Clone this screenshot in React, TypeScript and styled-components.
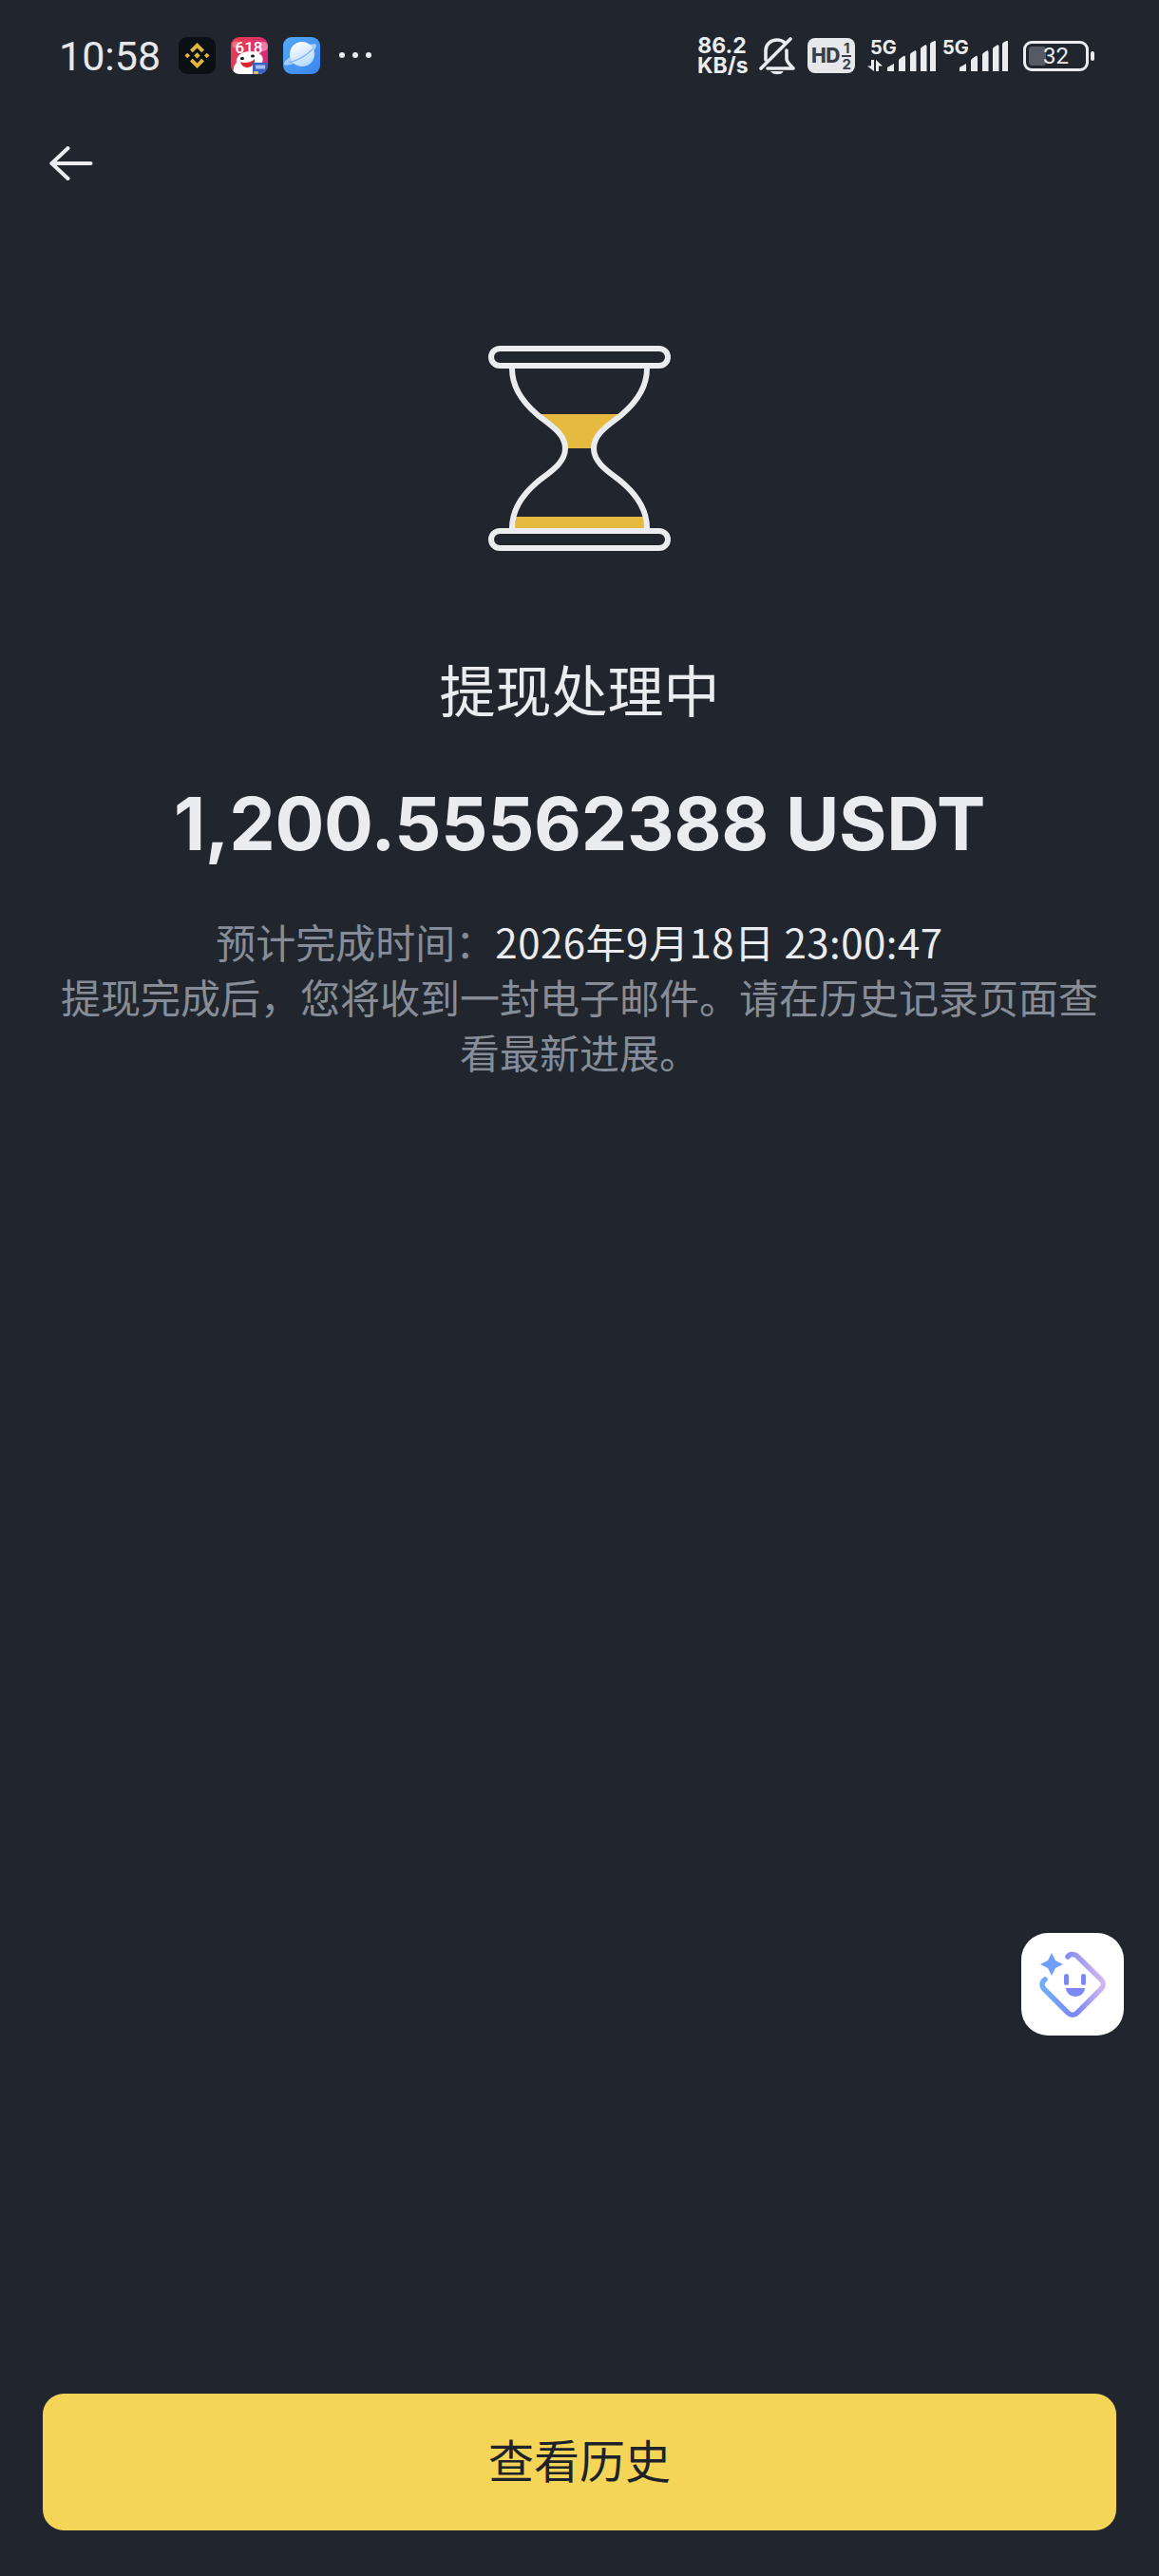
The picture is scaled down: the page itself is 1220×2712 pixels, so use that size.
import React from 'react'
import styled, { createGlobalStyle } from 'styled-components'

const Global = createGlobalStyle`
    html, body {
        margin: 0;
        padding: 0;
        background: #21262e;
    }
`

const BinanceIcon = () => (
    <svg width='39' height='39' viewBox='0 0 39 39'>
        <rect width='39' height='39' rx='9' fill='#0c1014' />
        <g fill='#e3b53f'>
            <path d='M19.5 6l7.5 7.500-2.800 2.800-4.700-4.700-4.700 4.700-2.800-2.800z' />
            <path d='M19.5 33l7.500-7.500-2.800-2.800-4.700 4.700-4.700-4.700-2.800 2.800z' />
            <path d='M19.5 16.300l3.200 3.200-3.200 3.200-3.200-3.200z' />
            <path d='M9.300 16.700l2.800 2.800-2.800 2.800-2.800-2.800z' />
            <path d='M29.700 16.700l2.800 2.800-2.800 2.800-2.800-2.800z' />
        </g>
    </svg>
)

const ShopIcon = () => (
    <svg width='39' height='39' viewBox='0 0 39 39'>
        <defs>
            <linearGradient id='shopBg' x1='0' y1='0' x2='1' y2='0.4'>
                <stop offset='0' stopColor='#e8404c' />
                <stop offset='1' stopColor='#d92a78' />
            </linearGradient>
            <clipPath id='shopClip'>
                <rect width='39' height='39' rx='9' />
            </clipPath>
        </defs>
        <g clipPath='url(#shopClip)'>
            <rect width='39' height='39' fill='url(#shopBg)' />
            <circle cx='34' cy='10' r='5' fill='#f27aa8' />
            <circle cx='5' cy='8' r='3.500' fill='#f2707e' />
            <path d='M3 39c-1-5 0-9 3-12-1-4 2-9 8-11 6-2 14-1 18 3 2 2 2 5 1 8v12z' fill='#fff' />
            <path d='M10 26c4 2 12 1 15-3 1 5-3 9-8 9-3 0-6-2-7-6z' fill='#d8262f' />
            <rect x='10' y='21' width='4' height='3' rx='1.500' fill='#1d1d1d' />
            <rect x='21' y='18.500' width='4' height='3' rx='1.500' fill='#1d1d1d' />
            <rect x='23' y='27' width='16' height='12' fill='#3a62c8' />
            <rect x='24' y='36' width='5' height='3' fill='#e9bf3f' />
            <path d='M26 29.500h10v4H26z' fill='#a9bfee' />
            <Digits x='19' y='17' textAnchor='middle'>618</Digits>
        </g>
    </svg>
)

const BrowserIcon = () => (
    <svg width='39' height='39' viewBox='0 0 39 39'>
        <defs>
            <linearGradient id='browserBg' x1='0' y1='0' x2='1' y2='1'>
                <stop offset='0' stopColor='#55a9f8' />
                <stop offset='1' stopColor='#3a84ee' />
            </linearGradient>
            <linearGradient id='planet' x1='0.2' y1='0' x2='0.7' y2='1'>
                <stop offset='0' stopColor='#ffffff' />
                <stop offset='1' stopColor='#b4d8fb' />
            </linearGradient>
        </defs>
        <rect width='39' height='39' rx='9' fill='url(#browserBg)' />
        <path d='M28 8c4-1 7-1 7 1 0 3-6 10-15 15-8 4-17 7-19 5-1-1 1-4 5-7z' fill='#a4d0fb' />
        <circle cx='20' cy='18' r='13' fill='url(#planet)' />
        <path d='M6 27c8-2 18-7 26-15' fill='none' stroke='#7fbaf8' strokeWidth='1.500' />
    </svg>
)

const BackArrow = () => (
    <svg width='46' height='36' viewBox='0 0 46 36' fill='none' stroke='#eaecef' strokeWidth='4' strokeLinecap='round' strokeLinejoin='round'>
        <path d='M2.500 18H43.500' />
        <path d='M19.500 2L2.500 18l17 16' />
    </svg>
)

const MutedBell = () => (
    <svg width='38' height='40' viewBox='0 0 38 40' fill='none' stroke='#eaecef' strokeWidth='3.600' strokeLinecap='round' strokeLinejoin='round'>
        <path d='M7 24V14C7 8 12 3 19 3C22 3 25 4 27 6' />
        <path d='M29 14V23C29 27 34 30 36 33H9' />
        <path d='M2 33L33 2' />
        <path d='M13 36.500H25C24 39.500 14 39.500 13 36.500Z' fill='#eaecef' strokeWidth='1' />
    </svg>
)

const SignalBars = () => (
    <svg width='51' height='32' viewBox='0 0 51 32' fill='#eaecef'>
        <path d='M0 32v-4l7-4v8z' />
        <path d='M12 32V21c0-1 .5-1.500 1-2l4-3c1-.5 2 0 2 1.500V32z' />
        <path d='M24 32V15c0-1 .5-2 1.500-2.500l3-2c1-.5 2 0 2 1.500v20z' />
        <path d='M35 32V9c0-1 .5-2 1.500-2.500l3-2c1-.5 2 0 2 1.500v26z' />
        <path d='M45 32V4c0-1 .5-2 1.500-2.500l3-1.500c1-.5 1.500 0 1.500 1.500V32z' />
    </svg>
)

const NetArrows = () => (
    <svg width='16' height='12' viewBox='0 0 16 12' fill='#eaecef'>
        <path d='M4 0h3v12L0 6.500h4z' />
        <path d='M9 12h3V6.500h4L9 0z' />
    </svg>
)

const HourGlass = () => (
    <svg width='198' height='222' viewBox='0 0 198 222' fill='none'>
        <path d='M53 75H145C134 84 114 94 114 111H84C84 94 64 84 53 75Z' fill='#e6b93f' />
        <path d='M32 183H166L168 195H30Z' fill='#e6b93f' />
        <g stroke='#eaecef' strokeWidth='6'>
            <rect x='6' y='6' width='186' height='18' rx='9' />
            <rect x='6' y='198' width='186' height='18' rx='9' />
            <path d='M28 27C28 48 40 63 54 75C64 84 84 94 84 111C84 128 64 138 54 147C40 159 28 174 28 195' />
            <path d='M170 27C170 48 158 63 144 75C134 84 114 94 114 111C114 128 134 138 144 147C158 159 170 174 170 195' />
        </g>
    </svg>
)

const AssistantIcon = () => (
    <svg width='72' height='72' viewBox='0 0 72 72' fill='none'>
        <defs>
            <linearGradient id='faceStroke' x1='0' y1='0.6' x2='1' y2='0.4'>
                <stop offset='0' stopColor='#70b0f8' />
                <stop offset='0.45' stopColor='#7a86f4' />
                <stop offset='1' stopColor='#d6b8ec' />
            </linearGradient>
        </defs>
        <path d='M14 3l4 8 8 4-8 4-4 8-4-8-8-4 8-4z' fill='#6f9ffa' />
        <path d='M31 7C33 4 38 3.500 41 6.500L66 31C69 34 69 38 66 41L41 66C38 69 34 69 31 66L7 42C3 38 3 34 7 31' stroke='url(#faceStroke)' strokeWidth='5.500' strokeLinecap='round' />
        <rect x='27' y='25' width='5' height='12' rx='2.500' fill='#7d86f5' />
        <rect x='45' y='25' width='5' height='12' rx='2.500' fill='#7d86f5' />
        <path d='M29 40H49C49 45 44 49 39 49S29 45 29 40Z' fill='#7d86f5' />
    </svg>
)

export default function App() {
    return (
        <Page>
            <Global />
            <StatusBar>
                <StatusLeft>
                    <Clock>10:58</Clock>
                    <AppIcons>
                        <BinanceIcon />
                        <ShopIcon />
                        <BrowserIcon />
                    </AppIcons>
                    <Dots>
                        <Dot />
                        <Dot />
                        <Dot />
                    </Dots>
                </StatusLeft>
                <StatusRight>
                    <Speed>
                        86.2
                        <br />
                        KB/s
                    </Speed>
                    <MutedBell />
                    <HdBadge>
                        HD
                        <HdSims>
                            <span>1</span>
                            <HdRule />
                            <span>2</span>
                        </HdSims>
                    </HdBadge>
                    <Signal>
                        <NetColumn $width={21}>
                            <NetLabel $inset={3}>5G</NetLabel>
                            <NetArrows />
                        </NetColumn>
                        <SignalBars />
                    </Signal>
                    <Signal>
                        <NetColumn $width={18}>
                            <NetLabel $inset={0}>5G</NetLabel>
                        </NetColumn>
                        <SignalBars />
                    </Signal>
                    <Battery>
                        <BatteryBody>
                            <BatteryFill />
                            <BatteryLevel>32</BatteryLevel>
                        </BatteryBody>
                        <BatteryTip />
                    </Battery>
                </StatusRight>
            </StatusBar>
            <NavBar>
                <BackArrow />
            </NavBar>
            <Content>
                <HourGlass />
                <Title>提现处理中</Title>
                <Amount>1,200.55562388 USDT</Amount>
                <Description>
                    <p>
                        预计完成时间：<strong>2026年9月18日 23:00:47</strong>
                    </p>
                    <p>提现完成后，您将收到一封电子邮件。请在历史记录页面查看最新进展。</p>
                </Description>
            </Content>
            <Footer>
                <HistoryButton>查看历史</HistoryButton>
            </Footer>
            <FloatingButton>
                <AssistantIcon />
            </FloatingButton>
        </Page>
    )
}

const cjk = `"Noto Sans CJK SC", "Noto Sans", sans-serif`

const Digits = styled.text`
    font-family: Roboto, sans-serif;
    font-size: 17px;
    font-weight: 500;
    fill: #ffffff;
`

const Page = styled.div`
    position: relative;
    display: flex;
    flex-direction: column;
    width: 1220px;
    height: 2712px;
    overflow: hidden;
    background: #21262e;
    color: #eaecef;
    font-family: ${cjk};
`

const StatusBar = styled.header`
    display: flex;
    justify-content: space-between;
    align-items: center;
    height: 117px;
    padding: 0 68px 0 62px;
    box-sizing: border-box;
`

const StatusLeft = styled.div`
    display: flex;
    align-items: center;
`

const Clock = styled.span`
    width: 126px;
    font-family: Roboto, sans-serif;
    font-size: 43px;
    line-height: 50px;
    color: #e6e8ec;
`

const AppIcons = styled.div`
    display: flex;
    gap: 16px;
    svg {
        display: block;
    }
`

const Dots = styled.div`
    display: flex;
    gap: 8px;
    margin-left: 20px;
    margin-top: -2px;
`

const Dot = styled.i`
    width: 6px;
    height: 6px;
    border-radius: 50%;
    background: #eaecef;
`

const StatusRight = styled.div`
    display: flex;
    align-items: center;
`

const Speed = styled.div`
    width: 52px;
    margin-right: 13px;
    text-align: center;
    white-space: nowrap;
    font-family: Inter, sans-serif;
    font-weight: 700;
    font-size: 23px;
    line-height: 21px;
    color: #eaecef;
`

const HdBadge = styled.div`
    display: flex;
    align-items: center;
    justify-content: center;
    gap: 2px;
    width: 50px;
    height: 37px;
    margin-left: 13px;
    margin-right: 13px;
    border-radius: 8px;
    background: #e6e8ec;
    color: #3a3f47;
    font-family: Inter, sans-serif;
    font-weight: 800;
    font-size: 21px;
    letter-spacing: -0.5px;
`

const HdSims = styled.div`
    display: flex;
    flex-direction: column;
    align-items: center;
    font-size: 15px;
    font-weight: 700;
    line-height: 15px;
`

const HdRule = styled.i`
    width: 10px;
    height: 2px;
    background: #3a3f47;
`

const Signal = styled.div`
    display: flex;
    align-items: flex-end;
    margin-right: 7px;
    height: 32px;
    svg {
        display: block;
    }
`

const NetColumn = styled.div<{ $width: number }>`
    display: flex;
    flex-direction: column;
    align-items: flex-start;
    justify-content: space-between;
    width: ${p => p.$width}px;
    height: 32px;
`

const NetLabel = styled.span<{ $inset: number }>`
    width: 30px;
    margin-left: ${p => p.$inset}px;
    font-family: Inter, sans-serif;
    font-weight: 700;
    font-size: 20px;
    line-height: 15px;
    color: #eaecef;
`

const Battery = styled.div`
    display: flex;
    align-items: center;
    gap: 2px;
    margin-left: 9px;
`

const BatteryBody = styled.div`
    position: relative;
    display: flex;
    align-items: center;
    justify-content: center;
    width: 69px;
    height: 32px;
    box-sizing: border-box;
    border: 3px solid #eaecef;
    border-radius: 9px;
`

const BatteryFill = styled.div`
    position: absolute;
    left: 3px;
    top: 3px;
    bottom: 3px;
    width: 18px;
    border-radius: 3px;
    background: #555a64;
`

const BatteryLevel = styled.span`
    position: relative;
    font-family: Roboto, sans-serif;
    font-size: 24px;
    line-height: 26px;
    color: #eaecef;
`

const BatteryTip = styled.div`
    width: 4px;
    height: 10px;
    border-radius: 2px;
    background: #eaecef;
`

const NavBar = styled.nav`
    display: flex;
    align-items: center;
    height: 110px;
    padding-left: 52px;
    svg {
        display: block;
    }
`

const Content = styled.main`
    display: flex;
    flex-direction: column;
    align-items: center;
    flex: 1;
    padding-top: 134px;
`

const Title = styled.h1`
    margin: 105px 0 0;
    font-size: 59px;
    font-weight: 400;
    line-height: 74px;
    color: #eaecef;
`

const Amount = styled.div`
    margin-top: 59px;
    font-family: Inter, sans-serif;
    font-size: 77px;
    font-weight: 700;
    line-height: 92px;
    letter-spacing: -0.3px;
    color: #eaecef;
`

const Description = styled.div`
    width: 1110px;
    margin-top: 49px;
    font-size: 42px;
    line-height: 58px;
    text-align: center;
    color: #868d98;
    p {
        margin: 0;
    }
    strong {
        font-weight: 400;
        letter-spacing: 0.5px;
        color: #eaecef;
    }
`

const Footer = styled.footer`
    padding: 0 45px 48px;
`

const HistoryButton = styled.button`
    display: block;
    width: 100%;
    height: 144px;
    padding: 0 0 8px;
    border: 0;
    border-radius: 22px;
    background: #f5d557;
    color: #1e2329;
    font-family: ${cjk};
    font-size: 48px;
    font-weight: 400;
`

const FloatingButton = styled.div`
    position: absolute;
    right: 37px;
    bottom: 569px;
    display: flex;
    align-items: center;
    justify-content: center;
    width: 108px;
    height: 108px;
    border-radius: 28px;
    background: #ffffff;
`
